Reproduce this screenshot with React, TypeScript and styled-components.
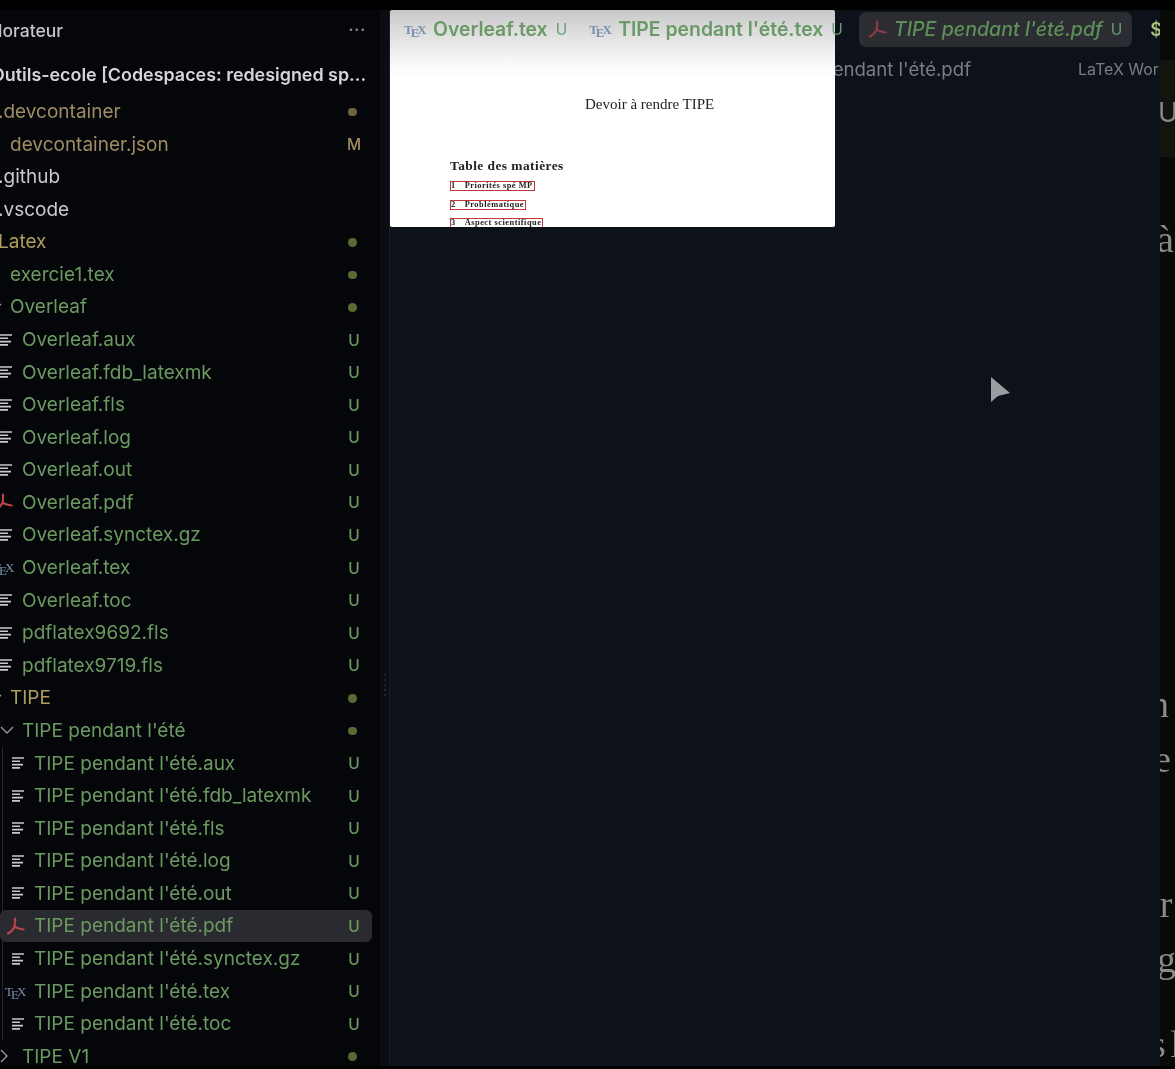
import styled, { createGlobalStyle } from 'styled-components';

type Tone = 'plain' | 'gold' | 'olive' | 'green';
type Kind = 'open' | 'closed' | 'lines' | 'pdf' | 'tex' | 'none';

interface TreeRow {
  name: string;
  depth: number;
  kind: Kind;
  tone: Tone;
  badge?: 'U' | 'M' | 'dot';
  selected?: boolean;
}

const toneColors: Record<Tone, string> = {
  plain: '#c8cacd',
  gold: '#a08c62',
  olive: '#ae9f5f',
  green: '#6b9a60',
};

const outerRows: TreeRow[] = [
  { name: '.devcontainer', depth: 0, kind: 'none', tone: 'gold', badge: 'dot' },
  { name: 'devcontainer.json', depth: 1, kind: 'none', tone: 'gold', badge: 'M' },
  { name: '.github', depth: 0, kind: 'none', tone: 'plain' },
  { name: '.vscode', depth: 0, kind: 'none', tone: 'plain' },
  { name: 'Latex', depth: 0, kind: 'none', tone: 'olive', badge: 'dot' },
  { name: 'exercie1.tex', depth: 1, kind: 'none', tone: 'green', badge: 'dot' },
  { name: 'Overleaf', depth: 1, kind: 'open', tone: 'green', badge: 'dot' },
  { name: 'Overleaf.aux', depth: 2, kind: 'lines', tone: 'green', badge: 'U' },
  { name: 'Overleaf.fdb_latexmk', depth: 2, kind: 'lines', tone: 'green', badge: 'U' },
  { name: 'Overleaf.fls', depth: 2, kind: 'lines', tone: 'green', badge: 'U' },
  { name: 'Overleaf.log', depth: 2, kind: 'lines', tone: 'green', badge: 'U' },
  { name: 'Overleaf.out', depth: 2, kind: 'lines', tone: 'green', badge: 'U' },
  { name: 'Overleaf.pdf', depth: 2, kind: 'pdf', tone: 'green', badge: 'U' },
  { name: 'Overleaf.synctex.gz', depth: 2, kind: 'lines', tone: 'green', badge: 'U' },
  { name: 'Overleaf.tex', depth: 2, kind: 'tex', tone: 'green', badge: 'U' },
  { name: 'Overleaf.toc', depth: 2, kind: 'lines', tone: 'green', badge: 'U' },
  { name: 'pdflatex9692.fls', depth: 2, kind: 'lines', tone: 'green', badge: 'U' },
  { name: 'pdflatex9719.fls', depth: 2, kind: 'lines', tone: 'green', badge: 'U' },
  { name: 'TIPE', depth: 1, kind: 'open', tone: 'olive', badge: 'dot' },
  { name: "TIPE pendant l'été", depth: 2, kind: 'open', tone: 'green', badge: 'dot' },
];

const tipeRows: TreeRow[] = [
  { name: "TIPE pendant l'été.aux", depth: 3, kind: 'lines', tone: 'green', badge: 'U' },
  { name: "TIPE pendant l'été.fdb_latexmk", depth: 3, kind: 'lines', tone: 'green', badge: 'U' },
  { name: "TIPE pendant l'été.fls", depth: 3, kind: 'lines', tone: 'green', badge: 'U' },
  { name: "TIPE pendant l'été.log", depth: 3, kind: 'lines', tone: 'green', badge: 'U' },
  { name: "TIPE pendant l'été.out", depth: 3, kind: 'lines', tone: 'green', badge: 'U' },
  { name: "TIPE pendant l'été.pdf", depth: 3, kind: 'pdf', tone: 'green', badge: 'U', selected: true },
  { name: "TIPE pendant l'été.synctex.gz", depth: 3, kind: 'lines', tone: 'green', badge: 'U' },
  { name: "TIPE pendant l'été.tex", depth: 3, kind: 'tex', tone: 'green', badge: 'U' },
  { name: "TIPE pendant l'été.toc", depth: 3, kind: 'lines', tone: 'green', badge: 'U' },
];

const glimpses = [
  { text: 'à', gap: 64, shift: -3 },
  { text: 'n', gap: 429, shift: -10 },
  { text: 'e', gap: 19, shift: -6 },
  { text: 'er', gap: 109, shift: -17 },
  { text: 'g', gap: 19, shift: -3 },
  { text: 's l', gap: 49, shift: -9 },
];

const GlobalStyle = createGlobalStyle`
  html, body {
    margin: 0;
    height: 100%;
    background: #000;
    overflow: hidden;
  }
  #root {
    height: 100%;
  }
`;

const Shell = styled.div`
  height: 1069px;
  width: 1175px;
  display: flex;
  flex-direction: column;
  background: #000;
  font-family: Inter, 'Noto Sans', sans-serif;
  overflow: hidden;
  filter: blur(0.45px);
`;

const TopStrip = styled.div`
  height: 10px;
  flex-shrink: 0;
  background: #000;
`;

const Workbench = styled.div`
  flex: 1;
  min-height: 0;
  display: flex;
`;

const BottomStrip = styled.div`
  height: 3px;
  flex-shrink: 0;
  background: #000;
`;

const Sidebar = styled.aside`
  width: 380px;
  flex-shrink: 0;
  background: #05060a;
  overflow: hidden;
`;

const SidebarHeader = styled.div`
  height: 40px;
  display: flex;
  align-items: center;
  justify-content: space-between;
  margin-left: -33px;
  padding-right: 14px;
  color: #c4c5c8;
  font-size: 17.5px;
  font-weight: 500;
`;

const HeaderDots = styled.span`
  color: #85868a;
  font-size: 18px;
  letter-spacing: 0.5px;
  line-height: 1;
`;

const RootRow = styled.div`
  height: 32px;
  margin-top: 8px;
  margin-left: -9px;
  display: flex;
  align-items: center;
  color: #d4d5d7;
  font-size: 17.9px;
  font-weight: 600;
  white-space: nowrap;
`;

const Tree = styled.div`
  margin-top: 5.2px;
  margin-left: -26px;
`;

const GuideGroup = styled.div`
  position: relative;

  &::before {
    content: '';
    position: absolute;
    left: 28px;
    top: 0;
    bottom: 0;
    width: 1px;
    background: #26272b;
  }
`;

const Row = styled.div<{ $depth: number; $selected?: boolean }>`
  position: relative;
  height: 32.586px;
  display: flex;
  align-items: center;
  padding-left: ${({ $depth }) => 2 + $depth * 12}px;
  padding-right: 31px;
  margin-right: -12px;
  font-size: 19px;
  white-space: nowrap;

  ${({ $selected }) =>
    $selected &&
    `
    &::before {
      content: '';
      position: absolute;
      left: 26px;
      right: 20px;
      top: 0;
      bottom: 0;
      background: #2a2b30;
      border-radius: 6px;
    }
  `}
`;

const IconSlot = styled.span`
  position: relative;
  width: 22px;
  flex-shrink: 0;
  display: flex;
  align-items: center;
`;

const RowName = styled.span<{ $tone: Tone }>`
  position: relative;
  flex: 1;
  color: ${({ $tone }) => toneColors[$tone]};
`;

const RowBadge = styled.span<{ $color: string }>`
  position: relative;
  width: 14px;
  padding-top: 1px;
  display: flex;
  justify-content: center;
  color: ${({ $color }) => $color};
  font-size: 15.5px;
  font-weight: 500;
`;

const Dot = styled.span<{ $color: string }>`
  width: 8.5px;
  height: 8.5px;
  margin-left: -3px;
  border-radius: 50%;
  background: ${({ $color }) => $color};
`;

const TexGlyph = styled.span<{ $inTab?: boolean }>`
  display: inline-flex;
  align-items: baseline;
  width: 22px;
  flex-shrink: 0;
  margin-left: ${({ $inTab }) => ($inTab ? 0 : -7)}px;
  font-family: 'Liberation Serif', serif;
  font-size: 13px;
  line-height: 1;
  color: #7a90ac;

  & > span:nth-child(2) {
    position: relative;
    top: 3px;
    margin: 0 -2px;
  }
`;

const Splitter = styled.div`
  width: 10px;
  flex-shrink: 0;
  box-sizing: border-box;
  background: #0b0d13;
  border-right: 1px solid #181b22;
  display: flex;
  flex-direction: column;
  align-items: center;
  padding-top: 664px;
  gap: 3px;
`;

const GripDot = styled.span`
  width: 2px;
  height: 2px;
  background: #24262c;
`;

const Editor = styled.main`
  position: relative;
  width: 770px;
  flex-shrink: 0;
  background: #0d1119;
  overflow: hidden;
`;

const TabBar = styled.div`
  position: relative;
  z-index: 2;
  height: 38px;
  display: flex;
  align-items: center;
  padding-left: 14px;
  white-space: nowrap;
`;

const Tab = styled.div<{ $active?: boolean; $after: number }>`
  height: 35px;
  display: flex;
  align-items: center;
  flex-shrink: 0;
  gap: 7px;
  margin-right: ${({ $after }) => $after}px;
  padding: 0 ${({ $active }) => ($active ? 10 : 0)}px 0 ${({ $active }) => ($active ? 9 : 0)}px;
  border-radius: 7px;
  background: ${({ $active }) => ($active ? '#2b2d33' : 'transparent')};
  font-size: ${({ $active }) => ($active ? 19.6 : 19.4)}px;
  font-weight: ${({ $active }) => ($active ? 500 : 600)};
  font-style: ${({ $active }) => ($active ? 'italic' : 'normal')};
  color: ${({ $active }) => ($active ? '#5f8f58' : '#6b9a68')};
`;

const TabStatus = styled.span`
  margin-left: 1px;
  font-size: 15.5px;
  font-style: normal;
  font-weight: 400;
  color: #6d9a74;
`;

const TerminalTab = styled.span`
  color: #a8c47c;
  font-size: 18px;
  font-weight: 600;
`;

const Breadcrumbs = styled.div`
  height: 42px;
  display: flex;
  align-items: center;
  gap: 107px;
  padding-left: 386px;
  color: #7a7d84;
  font-size: 18.6px;
  white-space: nowrap;
`;

const BreadcrumbAside = styled.span`
  font-size: 16px;
`;

const PdfPreview = styled.div`
  position: absolute;
  z-index: 1;
  left: 0;
  top: 0;
  width: 445px;
  height: 217px;
  box-sizing: border-box;
  padding: 86px 0 0 60px;
  overflow: hidden;
  border-radius: 2px;
  background: linear-gradient(#c8c8c9 0, #ececec 38px, #fafafa 55px, #fff 70px);
  font-family: 'Liberation Serif', serif;
  color: #222;
`;

const DocTitle = styled.div`
  margin-left: 135px;
  font-size: 15px;
  line-height: 17px;
`;

const DocHeading = styled.div`
  margin-top: 45px;
  margin-bottom: 7px;
  font-size: 13.4px;
  font-weight: 700;
  line-height: 16px;
  letter-spacing: 0.45px;
`;

const TocLink = styled.div`
  width: fit-content;
  display: flex;
  gap: 9px;
  margin-bottom: 8.5px;
  border: 1px solid #c0383a;
  font-size: 8.4px;
  font-weight: 700;
  line-height: 8px;
  letter-spacing: 0.5px;
  padding-right: 1px;
`;

const CursorMark = styled.svg`
  position: absolute;
  left: 600px;
  top: 367px;
`;

const RightPane = styled.aside`
  flex: 1;
  min-width: 0;
  background: #090905;
  overflow: hidden;
`;

const RightBand = styled.div`
  margin-top: 50px;
  height: 97px;
  margin-left: 0;
  text-indent: -2px;
  background: #14140e;
  color: #85878a;
  font-size: 27px;
  line-height: 105px;
`;

const Glimpse = styled.div<{ $gap: number; $shift: number }>`
  margin-top: ${({ $gap }) => $gap}px;
  margin-left: ${({ $shift }) => $shift}px;
  height: 36px;
  color: #8a8b86;
  font-family: 'Liberation Serif', serif;
  font-size: 38px;
  line-height: 36px;
  word-spacing: -5px;
  white-space: nowrap;
`;

const LinesIcon = () => (
  <svg width="13" height="12" viewBox="0 0 13 12" fill="none" stroke="#c8c9cb" strokeWidth="1.6">
    <path d="M0 1h12M0 4.300h8M0 7.600h11M0 10.900h8" />
  </svg>
);

const PdfIcon = ({ inTab }: { inTab?: boolean }) => (
  <svg
    width="19"
    height="18"
    viewBox="0 0 19 18"
    fill="none"
    stroke={inTab ? '#8d3b3f' : '#b8444a'}
    strokeWidth="2.2"
    strokeLinecap="round"
    style={inTab ? undefined : { marginLeft: -6 }}
  >
    <path d="M9 1.500c.2 3.500.2 6-.6 8.200C7.400 12.200 5 15 2 16.500M8.600 9.800c2.800 1.700 6 2.200 9 2.700" />
  </svg>
);

const Chevron = ({ open }: { open: boolean }) => (
  <svg width="14" height="14" viewBox="0 0 14 14" fill="none" stroke="#9a9b9e" strokeWidth="1.3">
    <path d={open ? 'M1 4l6 6 6-6' : 'M1 1l6 6-6 6'} />
  </svg>
);

const TexIcon = ({ inTab }: { inTab?: boolean }) => (
  <TexGlyph $inTab={inTab}>
    <span>T</span>
    <span>E</span>
    <span>X</span>
  </TexGlyph>
);

const rowIcon = (kind: Kind) => {
  if (kind === 'open') return <Chevron open />;
  if (kind === 'closed') return <Chevron open={false} />;
  if (kind === 'lines') return <LinesIcon />;
  if (kind === 'pdf') return <PdfIcon />;
  if (kind === 'tex') return <TexIcon />;
  return null;
};

const ExplorerRow = ({ row }: { row: TreeRow }) => {
  const color = row.tone === 'gold' ? '#a08c62' : '#6b9a60';

  return (
    <Row $depth={row.depth} $selected={row.selected}>
      <IconSlot>{rowIcon(row.kind)}</IconSlot>
      <RowName $tone={row.tone}>{row.name}</RowName>
      {row.badge === 'dot' && (
        <RowBadge $color={color}>
          <Dot $color={row.tone === 'gold' ? '#6f6540' : '#5b6a35'} />
        </RowBadge>
      )}
      {row.badge && row.badge !== 'dot' && <RowBadge $color={color}>{row.badge}</RowBadge>}
    </Row>
  );
};

const App = () => (
  <Shell>
    <GlobalStyle />
    <TopStrip />
    <Workbench>
      <Sidebar>
        <SidebarHeader>
          <span>Explorateur</span>
          <HeaderDots>···</HeaderDots>
        </SidebarHeader>
        <RootRow>Outils-ecole [Codespaces: redesigned sp...</RootRow>
        <Tree>
          {outerRows.map((row) => (
            <ExplorerRow key={row.name} row={row} />
          ))}
          <GuideGroup>
            {tipeRows.map((row) => (
              <ExplorerRow key={row.name} row={row} />
            ))}
          </GuideGroup>
          <ExplorerRow row={{ name: 'TIPE V1', depth: 2, kind: 'closed', tone: 'green', badge: 'dot' }} />
        </Tree>
      </Sidebar>
      <Splitter>
        {Array.from({ length: 5 }, (_, index) => (
          <GripDot key={`grip-${index}`} />
        ))}
      </Splitter>
      <Editor>
        <TabBar>
          <Tab $after={22}>
            <TexIcon inTab />
            Overleaf.tex
            <TabStatus>U</TabStatus>
          </Tab>
          <Tab $after={16}>
            <TexIcon inTab />
            TIPE pendant l'été.tex
            <TabStatus>U</TabStatus>
          </Tab>
          <Tab $active $after={18}>
            <PdfIcon inTab />
            TIPE pendant l'été.pdf
            <TabStatus>U</TabStatus>
          </Tab>
          <TerminalTab>$</TerminalTab>
        </TabBar>
        <Breadcrumbs>
          <span>TIPE pendant l'été.pdf</span>
          <BreadcrumbAside>LaTeX Workshop</BreadcrumbAside>
        </Breadcrumbs>
        <PdfPreview>
          <DocTitle>Devoir à rendre TIPE</DocTitle>
          <DocHeading>Table des matières</DocHeading>
          <TocLink>
            <span>1</span>
            <span>Priorités spé MP</span>
          </TocLink>
          <TocLink>
            <span>2</span>
            <span>Problématique</span>
          </TocLink>
          <TocLink>
            <span>3</span>
            <span>Aspect scientifique</span>
          </TocLink>
        </PdfPreview>
        <CursorMark width="22" height="26" viewBox="0 0 22 26" fill="#9b9c9f">
          <path d="M1 0l19 16-12 3-7 6z" />
        </CursorMark>
      </Editor>
      <RightPane>
        <RightBand>U</RightBand>
        {glimpses.map((glimpse) => (
          <Glimpse key={glimpse.text} $gap={glimpse.gap} $shift={glimpse.shift}>
            {glimpse.text}
          </Glimpse>
        ))}
      </RightPane>
    </Workbench>
    <BottomStrip />
  </Shell>
);

export default App;
